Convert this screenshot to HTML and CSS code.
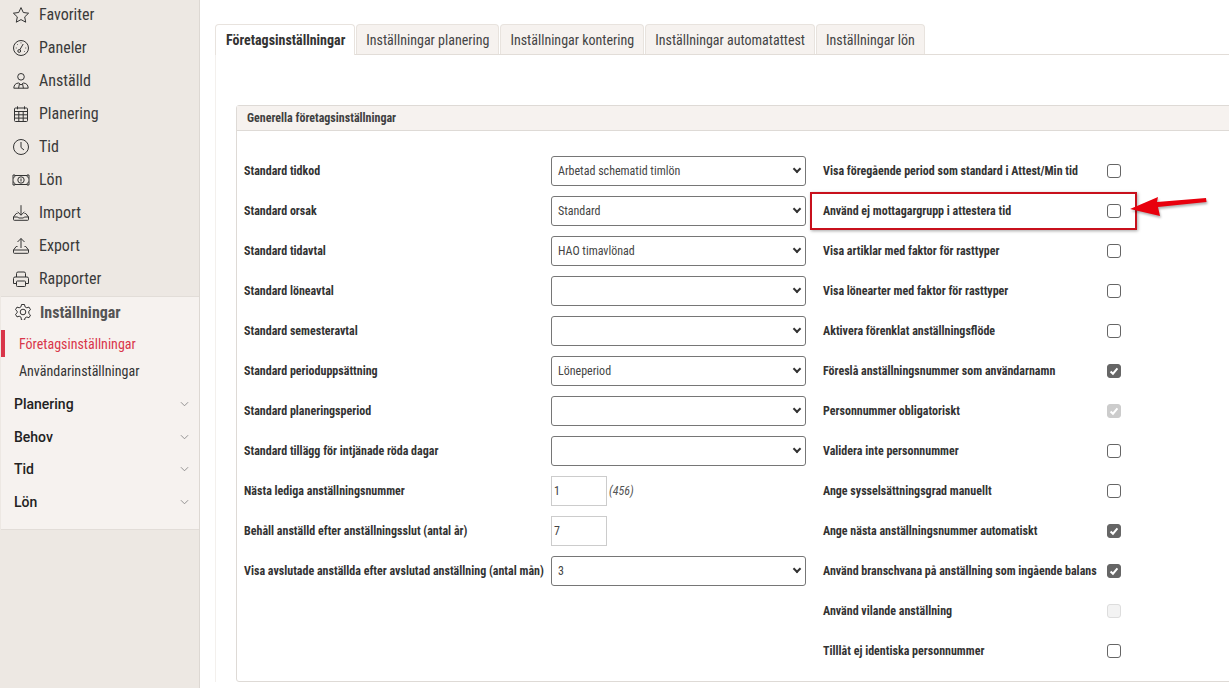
FILE: index.html
```html
<!DOCTYPE html>
<html lang="sv">
<head>
<meta charset="utf-8">
<title>Företagsinställningar</title>
<link rel="stylesheet" href="styles.css">
</head>
<body>
<aside class="sidebar">
  <nav class="nav">
    <a class="nav-item"><svg class="ico" viewBox="1 1 16 16"><path d="M9 1.600l2.300 4.900 5.300.7-3.900 3.700 1 5.300L9 13.600l-4.700 2.600 1-5.300-3.900-3.700 5.300-.7z"/></svg>Favoriter</a>
    <a class="nav-item"><svg class="ico" viewBox="1 1 16 16"><circle cx="9" cy="9" r="7.500"/><path d="M7.800 10.800l3.400-5.800"/><circle cx="7.200" cy="12" r="1.400"/><path d="M3.800 9h.8M5.300 5.300l.6.6M9 3.500v.8M14.200 9h-.8M12.700 12.700l-.6-.6"/></svg>Paneler</a>
    <a class="nav-item"><svg class="ico" viewBox="1 1 16 16"><circle cx="9" cy="4.800" r="3.300"/><path d="M1.800 16.200c0-3.200 2-5.200 5-5.200L9 13l2.200-2c3 0 5 2 5 5.200zM7.400 12l-.8 4.200M10.600 12l.8 4.200"/></svg>Anställd</a>
    <a class="nav-item"><svg class="ico" viewBox="1 1 16 16"><rect x="2.500" y="3" width="13" height="13.500" rx="1"/><path d="M2.500 6.500h13M2.500 9.800h13M2.500 13.100h13M6.800 6.500v10M11.200 6.500v10M5.500 1.300v3M12.500 1.300v3"/></svg>Planering</a>
    <a class="nav-item"><svg class="ico" viewBox="1 1 16 16"><circle cx="9" cy="9" r="7.500"/><path d="M9 4v5.500l3 2.500"/></svg>Tid</a>
    <a class="nav-item"><svg class="ico ico-wide" viewBox="0 0 18 14"><path d="M3 2H1v10h2M15 2h2v10h-2M3 2.500h12M3 11.500h12M1 5c1 0 2-1 2-3M17 5c-1 0-2-1-2-3M1 9c1 0 2 1 2 3M17 9c-1 0-2 1-2 3"/><circle cx="9" cy="7" r="3.200"/><path d="M9 5.500v3"/></svg>Lön</a>
    <a class="nav-item"><svg class="ico" viewBox="1 1 16 16"><path d="M9 1.200v10M5.500 7.700L9 11.200l3.500-3.500M5.500 9.500H4.200L1.500 13v2.500a.8.8 0 0 0 .8.8h13.400a.8.8 0 0 0 .8-.8V13l-2.700-3.500h-1.300M1.500 13h4.200l.9 1h4.800l.9-1h4.200"/></svg>Import</a>
    <a class="nav-item"><svg class="ico" viewBox="1 1 16 16"><path d="M9 11V1.500M5.500 5L9 1.500 12.500 5M5.500 9.500H4.200L1.500 13v2.500a.8.8 0 0 0 .8.8h13.400a.8.8 0 0 0 .8-.8V13l-2.700-3.500h-1.300M1.500 13h15"/></svg>Export</a>
    <a class="nav-item"><svg class="ico" viewBox="1 1 16 16"><path d="M4.500 7V3.500A1.500 1.500 0 0 1 6 2h6a1.500 1.500 0 0 1 1.500 1.500V7M4.500 13.500h-3V8.500A1.500 1.500 0 0 1 3 7h12a1.500 1.500 0 0 1 1.500 1.500v5h-3"/><rect x="4.500" y="11" width="9" height="5.500" rx=".8"/></svg>Rapporter</a>
  </nav>
  <section class="settings">
    <div class="settings-head"><svg class="ico" viewBox="1 1 16 16"><circle cx="9" cy="9" r="2.800"/><path d="M7.500 1.500h3l.5 2.300 1.800 1 2.200-.7 1.500 2.600-1.700 1.600v2.200l1.700 1.600-1.500 2.600-2.200-.7-1.800 1-.5 2.300h-3L7 14.200l-1.800-1-2.200.7-1.500-2.600 1.700-1.600V8.300L1.500 6.700 3 4.100l2.200.7 1.800-1z"/></svg>Inställningar</div>
    <a class="sub active">Företagsinställningar</a>
    <a class="sub">Användarinställningar</a>
    <div class="groups">
      <div class="group">Planering<svg class="chev" viewBox="0 0 10 6"><path d="M1 1l4 4 4-4"/></svg></div>
      <div class="group">Behov<svg class="chev" viewBox="0 0 10 6"><path d="M1 1l4 4 4-4"/></svg></div>
      <div class="group">Tid<svg class="chev" viewBox="0 0 10 6"><path d="M1 1l4 4 4-4"/></svg></div>
      <div class="group">Lön<svg class="chev" viewBox="0 0 10 6"><path d="M1 1l4 4 4-4"/></svg></div>
    </div>
  </section>
</aside>
<main class="main">
  <div class="tabs">
    <a class="tab current">Företagsinställningar</a>
    <a class="tab">Inställningar planering</a>
    <a class="tab">Inställningar kontering</a>
    <a class="tab">Inställningar automatattest</a>
    <a class="tab">Inställningar lön</a>
  </div>
  <div class="tab-body">
    <div class="panel">
      <div class="panel-head">Generella företagsinställningar</div>
      <div class="panel-body">
        <div class="col-left">
          <div class="row"><label>Standard tidkod</label><div class="sel">Arbetad schematid timlön</div></div>
          <div class="row"><label>Standard orsak</label><div class="sel">Standard</div></div>
          <div class="row"><label>Standard tidavtal</label><div class="sel">HAO timavlönad</div></div>
          <div class="row"><label>Standard löneavtal</label><div class="sel"></div></div>
          <div class="row"><label>Standard semesteravtal</label><div class="sel"></div></div>
          <div class="row"><label>Standard perioduppsättning</label><div class="sel">Löneperiod</div></div>
          <div class="row"><label>Standard planeringsperiod</label><div class="sel"></div></div>
          <div class="row"><label>Standard tillägg för intjänade röda dagar</label><div class="sel"></div></div>
          <div class="row"><label>Nästa lediga anställningsnummer</label><div class="num">1</div><em class="hint">(456)</em></div>
          <div class="row"><label>Behåll anställd efter anställningsslut (antal år)</label><div class="num">7</div></div>
          <div class="row"><label>Visa avslutade anställda efter avslutad anställning (antal mån)</label><div class="sel">3</div></div>
        </div>
        <div class="col-right">
          <div class="row"><label>Visa föregående period som standard i Attest/Min tid</label><span class="cb"></span></div>
          <div class="row"><label>Använd ej mottagargrupp i attestera tid</label><span class="cb"></span></div>
          <div class="row"><label>Visa artiklar med faktor för rasttyper</label><span class="cb"></span></div>
          <div class="row"><label>Visa lönearter med faktor för rasttyper</label><span class="cb"></span></div>
          <div class="row"><label>Aktivera förenklat anställningsflöde</label><span class="cb"></span></div>
          <div class="row"><label>Föreslå anställningsnummer som användarnamn</label><span class="cb on"><svg viewBox="0 0 14 14"><path d="M3 7.500l2.800 2.700L11 4"/></svg></span></div>
          <div class="row"><label>Personnummer obligatoriskt</label><span class="cb on dim"><svg viewBox="0 0 14 14"><path d="M3 7.500l2.800 2.700L11 4"/></svg></span></div>
          <div class="row"><label>Validera inte personnummer</label><span class="cb"></span></div>
          <div class="row"><label>Ange sysselsättningsgrad manuellt</label><span class="cb"></span></div>
          <div class="row"><label>Ange nästa anställningsnummer automatiskt</label><span class="cb on"><svg viewBox="0 0 14 14"><path d="M3 7.500l2.800 2.700L11 4"/></svg></span></div>
          <div class="row"><label>Använd branschvana på anställning som ingående balans</label><span class="cb on"><svg viewBox="0 0 14 14"><path d="M3 7.500l2.800 2.700L11 4"/></svg></span></div>
          <div class="row"><label>Använd vilande anställning</label><span class="cb off"></span></div>
          <div class="row"><label>Tilllåt ej identiska personnummer</label><span class="cb"></span></div>
        </div>
      </div>
    </div>
  </div>
</main>
<div class="callout"></div>
<svg class="arrow" viewBox="0 0 82 26"><path d="M2 15L30 3l-1 5 49-4 .5 4L30 13l2 9z"/></svg>
</body>
</html>
```
FILE: styles.css
```css
* { box-sizing: border-box; }
html, body { margin: 0; height: 688px; overflow: hidden; }
body {
  display: flex;
  position: relative;
  background: #fff;
  color: #333;
  font-family: "Roboto Condensed", "Liberation Sans Narrow", Roboto, sans-serif;
  font-stretch: condensed;
}
.sidebar {
  width: 200px;
  flex: none;
  height: 688px;
  background: #ede8e3;
  border-right: 1px solid #ddd8d3;
}
.nav { display: flex; flex-direction: column; margin-top: -2px; height: 298px; }
.nav-item {
  height: 33px;
  flex: none;
  display: flex;
  align-items: center;
  gap: 10px;
  padding-left: 13px;
  font-size: 16px;
  color: #3a3a3a;
}
.ico {
  width: 16px; height: 16px; flex: none;
  fill: none; stroke: #333; stroke-width: 1;
}
.ico-wide { width: 18px; height: 14px; margin-left: -1px; margin-right: -1px; }
.settings {
  margin-left: 1px;
  width: 198px;
  height: 234px;
  background: #f6f2ef;
  border-top: 1px solid #e2ddd8;
  border-bottom: 1px solid #e2ddd8;
}
.settings-head {
  height: 33px;
  padding: 0 0 3px 14px;
  display: flex;
  align-items: center;
  gap: 9px;
  font-size: 16px;
  font-weight: 700;
  color: #555;
}
.sub {
  display: flex;
  align-items: center;
  height: 27px;
  font-size: 14px;
  color: #333;
  border-left: 4px solid transparent;
  padding-left: 14px;
}
.sub.active { color: #d9364a; border-left-color: #d9364a; }
.groups { padding-top: 3.500px; }
.group {
  height: 32.700px;
  display: flex;
  align-items: center;
  justify-content: space-between;
  padding: 0 10px 0 13px;
  font-family: Roboto, sans-serif;
  font-stretch: normal;
  font-size: 14px;
  font-weight: 500;
  color: #222;
}
.chev { width: 9px; height: 6px; fill: none; stroke: #888; stroke-width: 1; }
.main { flex: 1; min-width: 0; padding: 24px 0 0 15px; overflow: hidden; }
.tabs { display: flex; gap: 1px; height: 31px; border-bottom: 1px solid #e2ddd8; }
.tab {
  height: 30px;
  padding: 0 9px;
  display: flex;
  align-items: center;
  font-size: 14px;
  background: #f6f2ef;
  border: 1px solid #e8e3de;
  border-bottom: 0;
  border-radius: 4px 4px 0 0;
  color: #444;
  white-space: nowrap;
}
.tab.current { height: 31px; padding: 0 9px 0 10px; background: #fff; font-weight: 700; color: #333; position: relative; z-index: 1; }
.tab-body { border-left: 1px solid #f3f0ed; padding: 50px 0 0 20px; }
.panel {
  width: 1100px;
  height: 577px;
  border: 1px solid #dedad6;
  border-radius: 3px 0 0 3px;
}
.panel-head {
  height: 25px;
  background: #f6f2ef;
  border-bottom: 1px solid #dedad6;
  display: flex;
  align-items: center;
  padding-left: 10px;
  font-size: 12px;
  font-weight: 700;
  color: #3f3f3f;
}
.panel-body { display: flex; padding: 20px 0 0 7px; }
.col-left { width: 579px; flex: none; }
.col-right { flex: 1; }
.row { display: flex; align-items: center; height: 40px; font-size: 12px; }
.row label { font-weight: 700; color: #333; white-space: nowrap; }
.col-left .row label { width: 307px; flex: none; }
.col-right .row label { width: 284px; flex: none; }
.sel {
  width: 255px;
  height: 30px;
  flex: none;
  border: 1px solid #767676;
  border-radius: 3px;
  padding-left: 6px;
  display: flex;
  align-items: center;
  color: #444;
  font-size: 12px;
  background: #fff;
  position: relative;
}
.sel::after {
  content: "";
  position: absolute;
  right: 5px; top: 9px;
  width: 4px; height: 4px;
  border-right: 2px solid #333;
  border-bottom: 2px solid #333;
  transform: rotate(45deg);
}
.num {
  width: 56px;
  height: 30px;
  flex: none;
  border: 1px solid #ccc;
  padding-left: 2px;
  display: flex;
  align-items: center;
  color: #444;
  font-size: 12px;
}
.hint { margin-left: 2px; color: #555; font-size: 12px; }
.cb {
  width: 14px; height: 14px; flex: none;
  border: 1px solid #666;
  border-radius: 3px;
  background: #fff;
  display: block;
}
.cb svg { display: block; width: 12px; height: 12px; fill: none; stroke: #fff; stroke-width: 2.300; }
.cb.on { background: #666; }
.cb.dim { background: #ccc; border-color: #ccc; }
.cb.off { background: #f3f3f3; border-color: #ddd; }
.callout {
  position: absolute;
  left: 810px; top: 192px;
  width: 327px; height: 38px;
  border: 2px solid #c8101c;
  box-shadow: 1px 1px 3px rgba(0,0,0,.35);
}
.arrow {
  position: absolute;
  left: 1128px; top: 194px;
  width: 82px; height: 26px;
  fill: #e8000d;
  filter: drop-shadow(1px 2px 1px rgba(0,0,0,.3));
}
```
